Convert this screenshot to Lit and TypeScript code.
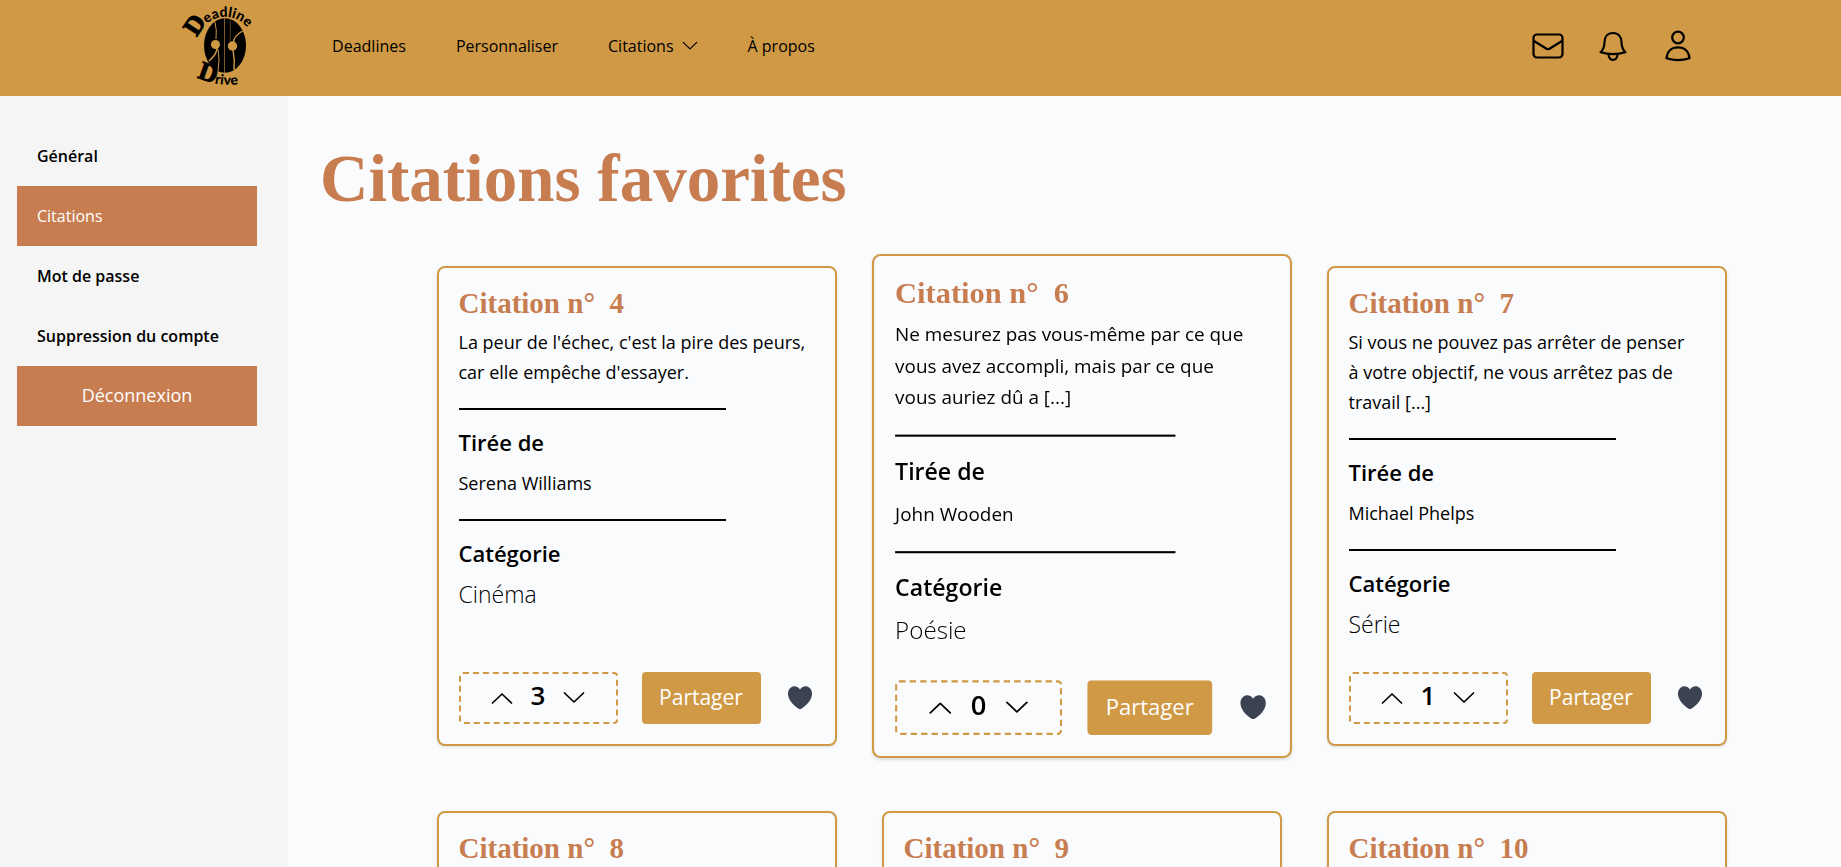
import { LitElement, html, svg, css } from "lit";
import { customElement, property, state } from "lit/decorators.js";
import { classMap } from "lit/directives/class-map.js";

interface Quote {
  id: number;
  text: string;
  author: string;
  category: string;
  votes: number;
}

const QUOTES: Quote[] = [
  { id: 4, text: "La peur de l'échec, c'est la pire des peurs,\ncar elle empêche d'essayer.", author: "Serena Williams", category: "Cinéma", votes: 3 },
  { id: 6, text: "Ne mesurez pas vous-même par ce que\nvous avez accompli, mais par ce que\nvous auriez dû a [...]", author: "John Wooden", category: "Poésie", votes: 0 },
  { id: 7, text: "Si vous ne pouvez pas arrêter de penser\nà votre objectif, ne vous arrêtez pas de\ntravail [...]", author: "Michael Phelps", category: "Série", votes: 1 },
  { id: 8, text: "", author: "", category: "", votes: 0 },
  { id: 9, text: "", author: "", category: "", votes: 0 },
  { id: 10, text: "", author: "", category: "", votes: 0 },
];

const chevron = (up: boolean) => html`
  <svg class="chevron" viewBox="0 0 22 14" aria-hidden="true">
    <path d=${up ? "M1.500 12 L11 3 L20.500 12" : "M1.500 2 L11 11 L20.500 2"} fill="none" stroke="currentColor" stroke-width="1.700" stroke-linecap="round" stroke-linejoin="round" />
  </svg>`;

@customElement("brand-logo")
export class BrandLogo extends LitElement {
  static styles = css`
    :host { display: block; }
    .logo { display: block; width: 68px; height: 96px; overflow: visible; }
    .word { font-family: "Lato", sans-serif; font-weight: 900; font-size: 14px; fill: #000; }
    .cap { font-family: "Liberation Serif", serif; font-weight: 700; font-size: 26px; stroke: #000; stroke-width: 1px; }
  `;
  render() {
    return html`
      <svg class="logo" viewBox="14 0 68 96" role="img" aria-label="Deadline Drive">
        <defs>
          <path id="top" d="M28 38 A28 28 0 0 1 83 42" />
          <path id="bottom" d="M27 77 Q54 91 86 80" />
        </defs>
        <ellipse cx="55" cy="45.500" rx="21" ry="27.200" />
        <g fill="none" stroke="#cf9945" stroke-width="1">
          <path d="M45 22 Q47 30 46 39 M48 49 Q50 60 48 71" />
          <path d="M54.500 18 V73" stroke-width="0.600" />
          <path d="M60 19 Q61 30 60 41" stroke-width="0.400" />
          <path d="M72.500 31 Q64 36 63.500 42 M63 50 Q65 60 64 70" stroke-width="1.400" />
          <path d="M47 48 Q47 54 39 61" stroke-width="1.500" />
        </g>
        <circle cx="45.500" cy="44.500" r="4.500" fill="#cf9945" />
        <circle cx="62.500" cy="46" r="4.700" fill="#cf9945" />
        <text class="word"><textPath href="#top"><tspan class="cap">D</tspan><tspan dx="-2">eadline</tspan></textPath></text>
        <text class="word"><textPath href="#bottom"><tspan class="cap">D</tspan>rive</textPath></text>
      </svg>`;
  }
}

@customElement("site-header")
export class SiteHeader extends LitElement {
  static styles = css`
    :host { display: block; }
    .bar { display: flex; align-items: center; height: 96px; padding: 0 8% 0 10%; background: #cf9945; }
    .menu { display: flex; align-items: center; gap: 50px; flex: 1; margin-left: 80px; padding-bottom: 4px; }
    .link { display: flex; align-items: center; gap: 8px; padding: 0; border: 0; background: none; color: #000; font: 400 16px/24px "Open Sans", sans-serif; text-decoration: none; white-space: nowrap; cursor: pointer; }
    .chevron { width: 16px; height: 10px; }
    .actions { display: flex; gap: 33px; padding-bottom: 4px; }
    .icon { display: block; width: 32px; height: 32px; padding: 0; border: 0; background: none; color: #000; cursor: pointer; }
    .glyph { display: block; width: 32px; height: 32px; fill: none; stroke: currentColor; stroke-width: 2.2; stroke-linecap: round; stroke-linejoin: round; }
  `;
  private icon(label: string, shape: unknown) {
    return html`<button class="icon" type="button" aria-label=${label}><svg class="glyph" viewBox="0 0 32 32">${shape}</svg></button>`;
  }
  render() {
    return html`
      <header class="bar">
        <a href="#accueil" aria-label="Accueil"><brand-logo></brand-logo></a>
        <nav class="menu">
          <a class="link" href="#deadlines">Deadlines</a>
          <a class="link" href="#personnaliser">Personnaliser</a>
          <button class="link" type="button" aria-haspopup="true">Citations ${chevron(false)}</button>
          <a class="link" href="#a-propos">À propos</a>
        </nav>
        <div class="actions">
          ${this.icon("Messages", svg`<rect x="1.500" y="4.500" width="29" height="23" rx="3.500"/><path d="M2 11 L14.500 18.800 Q16 19.700 17.500 18.800 L30 11"/>`)}
          ${this.icon("Notifications", svg`<path d="M16 3 C10.500 3 7.500 7 7.500 12 C7.500 17.500 6.500 19.500 3.600 22.300 Q16 26 28.400 22.300 C25.500 19.500 24.500 17.500 24.500 12 C24.500 7 21.500 3 16 3 Z M11.500 24.500 Q12 29.800 16 29.800 Q20 29.800 20.500 24.500"/>`)}
          ${this.icon("Profil", svg`<circle cx="16" cy="7.500" r="5.800"/><path d="M16 17.300 C9.500 17.300 5 21.500 4.500 28.300 Q16 32 27.500 28.300 C27 21.500 22.500 17.300 16 17.300 Z"/>`)}
        </div>
      </header>`;
  }
}

@customElement("account-menu")
export class AccountMenu extends LitElement {
  static styles = css`
    :host { display: block; background: #f5f5f5; }
    .list { display: flex; flex-direction: column; padding: 30px 31px 30px 17px; font-family: "Open Sans", sans-serif; }
    .item { padding: 0 20px; color: #000; font-size: 16px; font-weight: 600; line-height: 60px; text-decoration: none; }
    .current { background: #c87d50; color: #fff; font-weight: 500; }
    .logout { height: 60px; padding: 0 0 2px; border: 0; background: #c87d50; color: #fff; font: 400 18px/24px "Open Sans", sans-serif; cursor: pointer; }
  `;
  @state() private current = "Citations";
  render() {
    const items = ["Général", "Citations", "Mot de passe", "Suppression du compte"];
    return html`
      <nav class="list">
        ${items.map((name) => html`<a href="#" class=${classMap({ item: true, current: name === this.current })}>${name}</a>`)}
        <button class="logout" type="button">Déconnexion</button>
      </nav>`;
  }
}

@customElement("quote-card")
export class QuoteCard extends LitElement {
  static styles = css`
    :host { display: block; }
    .card { display: flex; flex-direction: column; box-sizing: border-box; min-height: 480px; padding: 20px; border: 2px solid #cf9945; border-radius: 8px; box-shadow: 0 1px 3px rgba(0, 0, 0, 0.12); color: #000; font: 400 18px/30px "Open Sans", sans-serif; }
    .raised { transform: scale(1.05); }
    .title { margin: 0 0 9px; color: #c87d50; font: 700 29px/30px "Liberation Serif", serif; white-space: pre; }
    .text { margin: 0; white-space: pre-line; }
    .rule { width: 75%; height: 2px; margin: 21px 0 17px; border: 0; background: #000; }
    .heading { margin: 0 0 11px; font-size: 22px; font-weight: 600; line-height: 30px; }
    .category { margin: 0; font-size: 23px; font-weight: 350; }
    .footer { display: flex; align-items: stretch; gap: 24px; height: 52px; margin-top: auto; }
    .votes { display: flex; flex: 1; box-sizing: border-box; align-items: center; justify-content: center; gap: 18px; border: 2px dashed #cf9945; border-radius: 4px; }
    .vote { display: flex; padding: 0; border: 0; background: none; color: #000; cursor: pointer; }
    .chevron { width: 22px; height: 14px; }
    .count { font-size: 26px; font-weight: 600; line-height: 42px; padding-bottom: 6px; }
    .share { width: 119px; padding: 0 0 2px; border: 0; border-radius: 4px; background: #cf9945; color: #fff; font: 400 21px/30px "Open Sans", sans-serif; cursor: pointer; }
    .like { display: flex; align-items: center; justify-content: center; width: 30px; padding: 0; border: 0; background: none; color: #3b4252; cursor: pointer; }
    .heart { width: 30px; height: 30px; }
  `;
  @property({ attribute: false }) quote!: Quote;
  @property({ type: Boolean }) raised = false;
  @state() private delta = 0;
  render() {
    const q = this.quote;
    return html`
      <article class=${classMap({ card: true, raised: this.raised })}>
        <h2 class="title">Citation n°  ${q.id}</h2>
        <p class="text">${q.text}</p>
        <hr class="rule" />
        <h3 class="heading">Tirée de</h3>
        <p class="text">${q.author}</p>
        <hr class="rule" />
        <h3 class="heading">Catégorie</h3>
        <p class="category">${q.category}</p>
        <div class="footer">
          <div class="votes">
            <button class="vote" type="button" aria-label="Voter pour" @click=${() => this.delta++}>${chevron(true)}</button>
            <span class="count">${q.votes + this.delta}</span>
            <button class="vote" type="button" aria-label="Voter contre" @click=${() => this.delta--}>${chevron(false)}</button>
          </div>
          <button class="share" type="button">Partager</button>
          <button class="like" type="button" aria-label="Retirer des favoris">
            <svg class="heart" viewBox="-1 0 30 30" aria-hidden="true">
              <path fill="currentColor" d="M14 6.500 C12 3.500 8.500 2.700 6.200 3.700 C3 5 1.600 8.300 2 11.800 C2.600 17.500 7.500 22.500 12.300 25.400 Q14 26.400 15.700 25.400 C20.500 22.500 25.400 17.500 26 11.800 C26.400 8.300 25 5 21.800 3.700 C19.500 2.700 16 3.500 14 6.500 Z" />
            </svg>
          </button>
        </div>
      </article>`;
  }
}

@customElement("app-root")
export class AppRoot extends LitElement {
  static styles = css`
    :host { display: flex; flex-direction: column; min-height: 100vh; background: #fafbfd; }
    .body { display: grid; grid-template-columns: 288px minmax(0, 1fr); flex: 1; }
    .main { padding: 42px 0 48px 32px; }
    .title { margin: 0 0 48px; color: #c87d50; font: 700 67px/80px "Liberation Serif", serif; }
    .cards { display: grid; grid-template-columns: repeat(auto-fit, 400px); justify-content: center; gap: 65px 45px; padding: 0 78px 0 80px; }
  `;
  @state() private active = 6;
  render() {
    return html`
      <site-header></site-header>
      <div class="body">
        <account-menu></account-menu>
        <main class="main">
          <h1 class="title">Citations favorites</h1>
          <section class="cards">
            ${QUOTES.map((q) => html`<quote-card .quote=${q} ?raised=${q.id === this.active} @mouseenter=${() => (this.active = q.id)}></quote-card>`)}
          </section>
        </main>
      </div>`;
  }
}
